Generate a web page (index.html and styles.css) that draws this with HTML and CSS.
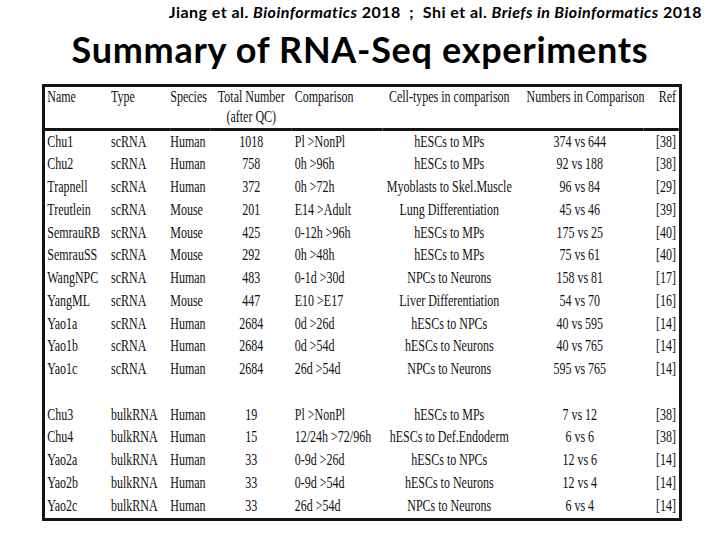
FILE: index.html
```html
<!DOCTYPE html>
<html>
<head>
<meta charset="utf-8">
<link rel="stylesheet" href="styles.css">
</head>
<body>
<div class="slide">
  <div class="cite"><span>Jiang et al. <i>Bioinformatics</i> 2018&nbsp; ;&nbsp; Shi et al. <i>Briefs in Bioinformatics</i> 2018</span></div>
  <h1 class="title"><span>Summary of RNA-Seq experiments</span></h1>
  <div class="box">
    <div class="squeeze">
      <table class="rna">
        <colgroup>
          <col class="w1"><col class="w2"><col class="w3"><col class="w4"><col class="w5"><col class="w6"><col class="w7"><col class="w8">
        </colgroup>
        <thead>
          <tr>
            <th class="l pad">Name</th>
            <th class="l">Type</th>
            <th class="l">Species</th>
            <th class="c">Total Number<br>(after QC)</th>
            <th class="l pad">Comparison</th>
            <th class="c">Cell-types in comparison</th>
            <th class="c shift">Numbers in Comparison</th>
            <th class="r">Ref</th>
          </tr>
        </thead>
        <tbody>
          <tr><td class="l pad">Chu1</td><td class="l">scRNA</td><td class="l">Human</td><td class="c">1018</td><td class="l pad">Pl &gt;NonPl</td><td class="c">hESCs to MPs</td><td class="c">374 vs 644</td><td class="r">[38]</td></tr>
          <tr><td class="l pad">Chu2</td><td class="l">scRNA</td><td class="l">Human</td><td class="c">758</td><td class="l pad">0h &gt;96h</td><td class="c">hESCs to MPs</td><td class="c">92 vs 188</td><td class="r">[38]</td></tr>
          <tr><td class="l pad">Trapnell</td><td class="l">scRNA</td><td class="l">Human</td><td class="c">372</td><td class="l pad">0h &gt;72h</td><td class="c">Myoblasts to Skel.Muscle</td><td class="c">96 vs 84</td><td class="r">[29]</td></tr>
          <tr><td class="l pad">Treutlein</td><td class="l">scRNA</td><td class="l">Mouse</td><td class="c">201</td><td class="l pad">E14 &gt;Adult</td><td class="c">Lung Differentiation</td><td class="c">45 vs 46</td><td class="r">[39]</td></tr>
          <tr><td class="l pad">SemrauRB</td><td class="l">scRNA</td><td class="l">Mouse</td><td class="c">425</td><td class="l pad">0-12h &gt;96h</td><td class="c">hESCs to MPs</td><td class="c">175 vs 25</td><td class="r">[40]</td></tr>
          <tr><td class="l pad">SemrauSS</td><td class="l">scRNA</td><td class="l">Mouse</td><td class="c">292</td><td class="l pad">0h &gt;48h</td><td class="c">hESCs to MPs</td><td class="c">75 vs 61</td><td class="r">[40]</td></tr>
          <tr><td class="l pad">WangNPC</td><td class="l">scRNA</td><td class="l">Human</td><td class="c">483</td><td class="l pad">0-1d &gt;30d</td><td class="c">NPCs to Neurons</td><td class="c">158 vs 81</td><td class="r">[17]</td></tr>
          <tr><td class="l pad">YangML</td><td class="l">scRNA</td><td class="l">Mouse</td><td class="c">447</td><td class="l pad">E10 &gt;E17</td><td class="c">Liver Differentiation</td><td class="c">54 vs 70</td><td class="r">[16]</td></tr>
          <tr><td class="l pad">Yao1a</td><td class="l">scRNA</td><td class="l">Human</td><td class="c">2684</td><td class="l pad">0d &gt;26d</td><td class="c">hESCs to NPCs</td><td class="c">40 vs 595</td><td class="r">[14]</td></tr>
          <tr><td class="l pad">Yao1b</td><td class="l">scRNA</td><td class="l">Human</td><td class="c">2684</td><td class="l pad">0d &gt;54d</td><td class="c">hESCs to Neurons</td><td class="c">40 vs 765</td><td class="r">[14]</td></tr>
          <tr><td class="l pad">Yao1c</td><td class="l">scRNA</td><td class="l">Human</td><td class="c">2684</td><td class="l pad">26d &gt;54d</td><td class="c">NPCs to Neurons</td><td class="c">595 vs 765</td><td class="r">[14]</td></tr>
          <tr class="blank"><td colspan="8">&nbsp;</td></tr>
          <tr><td class="l pad">Chu3</td><td class="l">bulkRNA</td><td class="l">Human</td><td class="c">19</td><td class="l pad">Pl &gt;NonPl</td><td class="c">hESCs to MPs</td><td class="c">7 vs 12</td><td class="r">[38]</td></tr>
          <tr><td class="l pad">Chu4</td><td class="l">bulkRNA</td><td class="l">Human</td><td class="c">15</td><td class="l pad">12/24h &gt;72/96h</td><td class="c">hESCs to Def.Endoderm</td><td class="c">6 vs 6</td><td class="r">[38]</td></tr>
          <tr><td class="l pad">Yao2a</td><td class="l">bulkRNA</td><td class="l">Human</td><td class="c">33</td><td class="l pad">0-9d &gt;26d</td><td class="c">hESCs to NPCs</td><td class="c">12 vs 6</td><td class="r">[14]</td></tr>
          <tr><td class="l pad">Yao2b</td><td class="l">bulkRNA</td><td class="l">Human</td><td class="c">33</td><td class="l pad">0-9d &gt;54d</td><td class="c">hESCs to Neurons</td><td class="c">12 vs 4</td><td class="r">[14]</td></tr>
          <tr><td class="l pad">Yao2c</td><td class="l">bulkRNA</td><td class="l">Human</td><td class="c">33</td><td class="l pad">26d &gt;54d</td><td class="c">NPCs to Neurons</td><td class="c">6 vs 4</td><td class="r">[14]</td></tr>
        </tbody>
      </table>
    </div>
  </div>
</div>
</body>
</html>
```

FILE: styles.css
```css
html, body {
  margin: 0;
  padding: 0;
  background: #ffffff;
}

.slide {
  width: 720px;
  height: 540px;
  overflow: hidden;
  background: #ffffff;
  color: #000000;
}

.cite {
  padding-top: 2px;
  padding-right: 18px;
  height: 20px;
  line-height: 20px;
  text-align: right;
  font-family: Lato, "Open Sans", sans-serif;
  font-weight: 700;
  font-size: 16px;
  letter-spacing: 0.45px;
  white-space: nowrap;
}

.cite i {
  font-style: italic;
}

.title {
  margin: 7px 0 0 0;
  height: 40px;
  line-height: 40px;
  text-align: center;
  font-family: Lato, "Open Sans", sans-serif;
  font-weight: 700;
  font-size: 36px;
  letter-spacing: 0.7px;
  white-space: nowrap;
}

.box {
  margin-top: 15px;
  margin-left: 42px;
  width: 640px;
  box-sizing: border-box;
  border: 3px solid #141414;
  overflow: hidden;
}

.squeeze {
  width: 845.3px;
  transform: scaleX(0.75);
  transform-origin: 0 0;
}

.rna {
  width: 845.3px;
  table-layout: fixed;
  border-collapse: separate;
  border-spacing: 0;
  font-family: "Liberation Serif", "Times New Roman", serif;
  font-size: 16px;
  color: #111111;
}

.w1 { width: 88px; }
.w2 { width: 79px; }
.w3 { width: 54px; }
.w4 { width: 108px; }
.w5 { width: 121px; }
.w6 { width: 178px; }
.w7 { width: 170px; }
.w8 { width: 47.3px; }

.rna th {
  font-weight: 400;
  line-height: 20px;
  padding: 0 0 1px 0;
  vertical-align: top;
  border-bottom: 3px solid #141414;
  white-space: nowrap;
}

.rna td {
  line-height: 17px;
  padding: 1.5px 0 4.25px 0;
  white-space: nowrap;
}

.l { text-align: left; }
.c { text-align: center; }
.r { text-align: right; }

.rna .pad { padding-left: 3px; }
.rna td.pad.l:nth-child(5), .rna th.pad.l:nth-child(5) { padding-left: 4px; }
.rna .r { padding-right: 4px; }
.rna th.shift { padding-left: 14px; }
```
